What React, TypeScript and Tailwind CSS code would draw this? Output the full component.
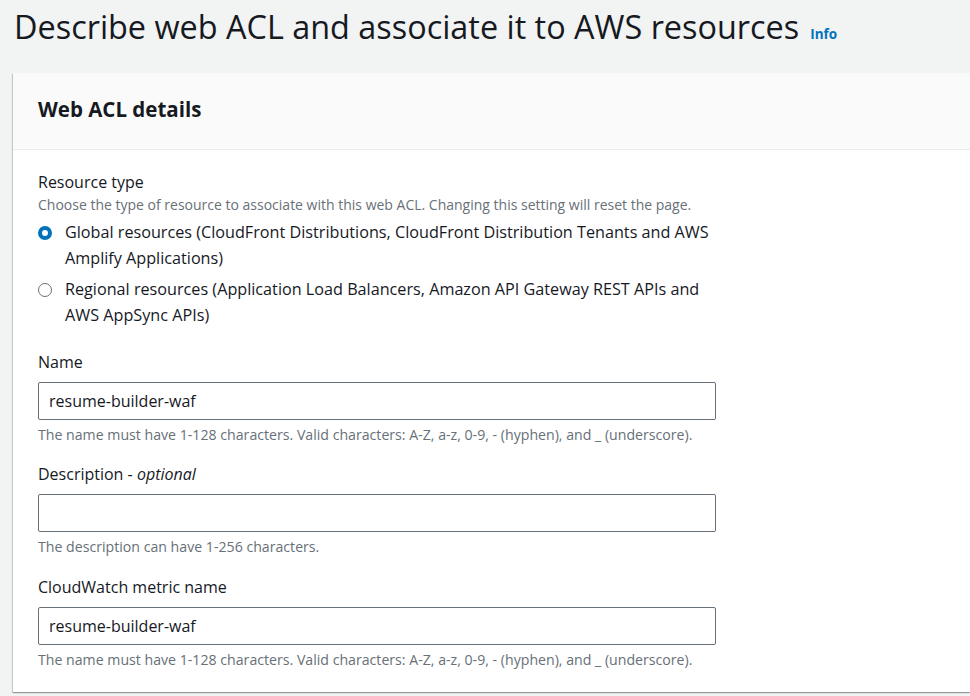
import React from "react";

const font = { fontFamily: '"Open Sans", "Noto Sans", sans-serif' };

function Radio({ checked }: { checked: boolean }) {
  return checked ? (
    <span className="mt-[7px] block h-[14px] w-[14px] shrink-0 rounded-full border-[4px] border-[#0073bb] bg-white" />
  ) : (
    <span className="mt-[7px] block h-[14px] w-[14px] shrink-0 rounded-full border-[1.5px] border-[#687078] bg-white" />
  );
}

function Field({
  label,
  optional,
  value,
  helper,
  className,
}: {
  label: string;
  optional?: boolean;
  value: string;
  helper: string;
  className?: string;
}) {
  return (
    <div className={className}>
      <div className="text-[16px] leading-[22px] text-[#16191f]">
        {label}
        {optional && (
          <>
            {" - "}
            <i>optional</i>
          </>
        )}
      </div>
      <div className="mt-[9px] flex h-[38px] w-[678px] items-center rounded-[2px] border border-[#687078] bg-white px-[10px] text-[16px] text-[#16191f]">
        {value}
      </div>
      <div className="mt-[5px] text-[14.15px] leading-[20px] text-[#687078]">{helper}</div>
    </div>
  );
}

export default function App() {
  return (
    <div style={font} className="h-[696px] w-[970px] overflow-hidden bg-[#f2f3f3]">
      <div className="flex items-baseline pl-[14px] pt-[6px]">
        <h1 className="text-[32.4px] leading-[40px] text-[#16191f]">
          Describe web ACL and associate it to AWS resources
        </h1>
        <span className="ml-[11px] text-[13.5px] font-bold text-[#0073bb]">Info</span>
      </div>
      <div className="ml-[13px] mt-[27px] bg-white shadow-[0_1px_1px_0_rgba(0,28,36,0.3),-1px_1px_1px_0_rgba(0,28,36,0.15)]">
        <div className="h-[77px] border-b border-[#eaeded] bg-[#fafafa] pl-[25px] pt-[24px]">
          <h2 className="text-[20.5px] font-bold leading-[24px] text-[#16191f]">Web ACL details</h2>
        </div>
        <div className="pb-[22px] pl-[25px] pt-[21px]">
          <div className="text-[16px] leading-[22px] text-[#16191f]">Resource type</div>
          <div className="mt-[2px] text-[14px] leading-[20px] text-[#687078]">
            Choose the type of resource to associate with this web ACL. Changing this setting will reset the page.
          </div>
          <div className="mt-[4px] flex gap-[13px]">
            <Radio checked />
            <div className="w-[660px] text-[16.2px] leading-[26px] text-[#16191f]">
              Global resources (CloudFront Distributions, CloudFront Distribution Tenants and AWS Amplify
              Applications)
            </div>
          </div>
          <div className="mt-[5px] flex gap-[13px]">
            <Radio checked={false} />
            <div className="w-[660px] text-[16.2px] leading-[26px] text-[#16191f]">
              Regional resources (Application Load Balancers, Amazon API Gateway REST APIs and AWS AppSync APIs)
            </div>
          </div>
          <Field
            className="mt-[23px]"
            label="Name"
            value="resume-builder-waf"
            helper="The name must have 1-128 characters. Valid characters: A-Z, a-z, 0-9, - (hyphen), and _ (underscore)."
          />
          <Field
            className="mt-[18px]"
            label="Description"
            optional
            value=""
            helper="The description can have 1-256 characters."
          />
          <Field
            className="mt-[19px]"
            label="CloudWatch metric name"
            value="resume-builder-waf"
            helper="The name must have 1-128 characters. Valid characters: A-Z, a-z, 0-9, - (hyphen), and _ (underscore)."
          />
        </div>
      </div>
    </div>
  );
}
